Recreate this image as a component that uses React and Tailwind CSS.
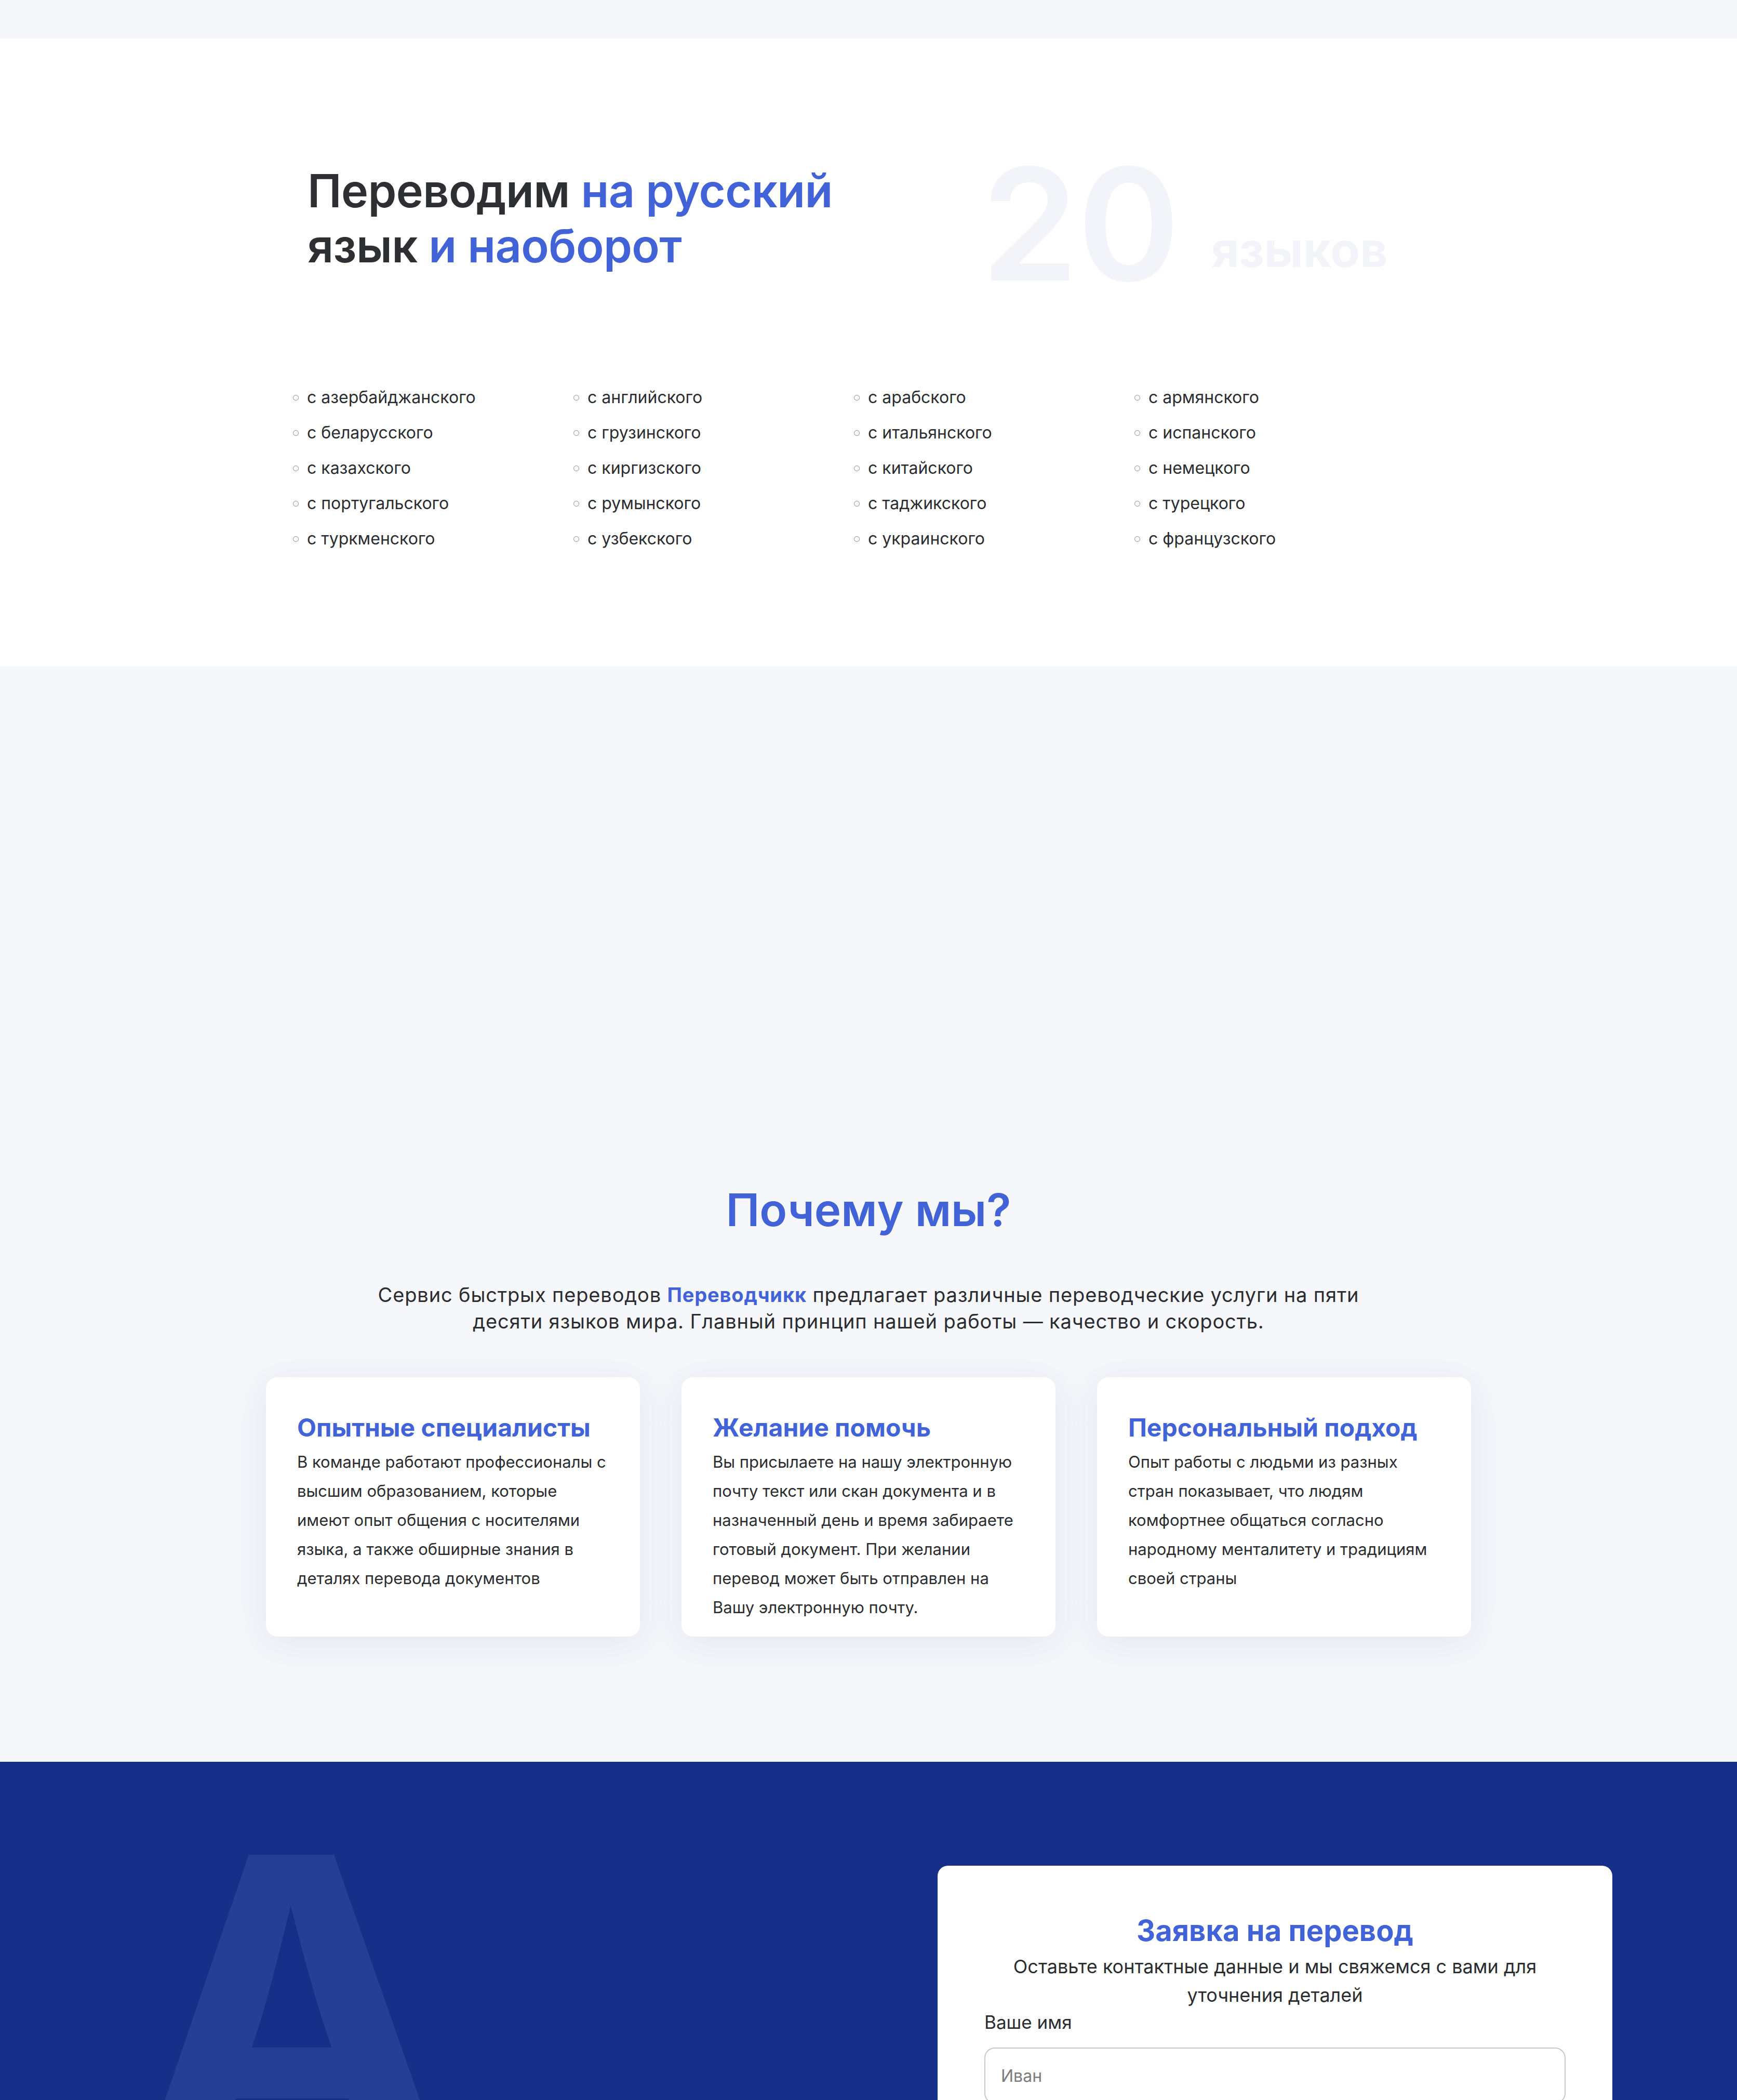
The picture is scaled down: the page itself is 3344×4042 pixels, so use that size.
const languages = [
  'с азербайджанского',
  'с английского',
  'с арабского',
  'с армянского',
  'с беларусского',
  'с грузинского',
  'с итальянского',
  'с испанского',
  'с казахского',
  'с киргизского',
  'с китайского',
  'с немецкого',
  'с португальского',
  'с румынского',
  'с таджикского',
  'с турецкого',
  'с туркменского',
  'с узбекского',
  'с украинского',
  'с французского'
]

const features = [
  {
    title: 'Опытные специалисты',
    text: 'В команде работают профессионалы с высшим образованием, которые имеют опыт общения с носителями языка, а также обширные знания в деталях перевода документов'
  },
  {
    title: 'Желание помочь',
    text: 'Вы присылаете на нашу электронную почту текст или скан документа и в назначенный день и время забираете готовый документ. При желании перевод может быть отправлен на Вашу электронную почту.'
  },
  {
    title: 'Персональный подход',
    text: 'Опыт работы с людьми из разных стран показывает, что людям комфортнее общаться согласно народному менталитету и традициям своей страны'
  }
]

function LanguagesSection() {
  return (
    <section className="bg-white pt-[240px] pb-[212px]">
      <div className="w-[2160px] mx-auto">
        <div className="flex items-start">
          <h2 className="w-[1297px] text-[88px] leading-[1.2] font-semibold text-[#2e2f33] tracking-[-0.6px]">
            Переводим <span className="text-[#4263d8]">на русский</span>
            <br />
            язык <span className="text-[#4263d8]">и наоборот</span>
          </h2>
          <div className="flex items-start -mt-[34px] select-none">
            <span className="text-[300px] leading-none font-semibold text-[#f3f4fa] tracking-[-2px]">20</span>
            <span className="ml-[62px] mt-[153px] text-[93px] leading-none font-bold text-[#f3f4fa]">языков</span>
          </div>
        </div>
        <ul className="mt-[150px] grid grid-cols-4">
          {languages.map((lang) => (
            <li key={lang} className="h-[68px] flex items-center text-[32px] text-[#2b2c30]">
              <span className="-ml-[28px] mr-[16px] w-[11px] h-[11px] rounded-full border-[1.5px] border-[#8a8b90]"></span>
              {lang}
            </li>
          ))}
        </ul>
      </div>
    </section>
  )
}

function WhySection() {
  return (
    <section className="bg-[#f6f7fb] pt-[994px] pb-[241px]">
      <h2 className="text-center text-[87px] leading-[1.2] font-semibold text-[#4263d8]">Почему мы?</h2>
      <p className="mt-[86px] mx-auto w-[1960px] text-center text-[38px] leading-[51px] tracking-[0.85px] text-[#2b2c30]">
        Сервис быстрых переводов <b className="font-bold text-[#4263d8]">Переводчикк</b> предлагает различные
        переводческие услуги на пяти десяти языков мира. Главный принцип нашей работы — качество и скорость.
      </p>
      <div className="mt-[82px] mx-auto w-[2320px] grid grid-cols-3 gap-[80px]">
        {features.map((f) => (
          <div
            key={f.title}
            className="bg-white rounded-[22px] pt-[68px] pb-[28px] px-[60px] shadow-[0_12px_70px_rgba(30,45,100,0.09)]"
          >
            <h3 className="text-[48px] leading-[1.2] font-bold text-[#4263d8]">{f.title}</h3>
            <p className="mt-[9px] text-[31px] leading-[56px] text-[#2b2c30]">{f.text}</p>
          </div>
        ))}
      </div>
    </section>
  )
}

function RequestSection() {
  return (
    <section className="bg-[#163089] pt-[200px] pb-[200px] overflow-hidden">
      <div className="w-[2864px] mx-auto flex justify-between items-start">
        <div className="pl-[10px] -mt-[135px] text-[840px] leading-none font-bold text-[#263e93] select-none">A</div>
        <div className="w-[1299px] bg-white rounded-[20px] pt-[92px] px-[90px] pb-[90px]">
          <h2 className="text-center text-[56px] leading-[1.2] font-bold text-[#4263d8]">Заявка на перевод</h2>
          <p className="mt-[8px] text-center text-[36px] leading-[55px] text-[#2b2c30]">
            Оставьте контактные данные и мы свяжемся с вами для уточнения деталей
          </p>
          <label className="block text-[35px] leading-[1.4] text-[#2b2c30]">Ваше имя</label>
          <input
            type="text"
            placeholder="Иван"
            className="mt-[24px] w-full h-[108px] px-[30px] rounded-[20px] border-2 border-[#c8c8c8] text-[32px] placeholder:text-[#7b7b7b] outline-none"
          />
          <label className="mt-[40px] block text-[35px] leading-[1.4] text-[#2b2c30]">Телефон</label>
          <input
            type="text"
            placeholder="+7 (999) 999-99-99"
            className="mt-[24px] w-full h-[108px] px-[30px] rounded-[20px] border-2 border-[#c8c8c8] text-[32px] placeholder:text-[#7b7b7b] outline-none"
          />
        </div>
      </div>
    </section>
  )
}

function App() {
  return (
    <div className="font-['Inter',sans-serif] min-h-screen bg-white">
      <div className="h-[75px] bg-[#f6f7fb]"></div>
      <LanguagesSection />
      <WhySection />
      <RequestSection />
    </div>
  )
}

export default App
